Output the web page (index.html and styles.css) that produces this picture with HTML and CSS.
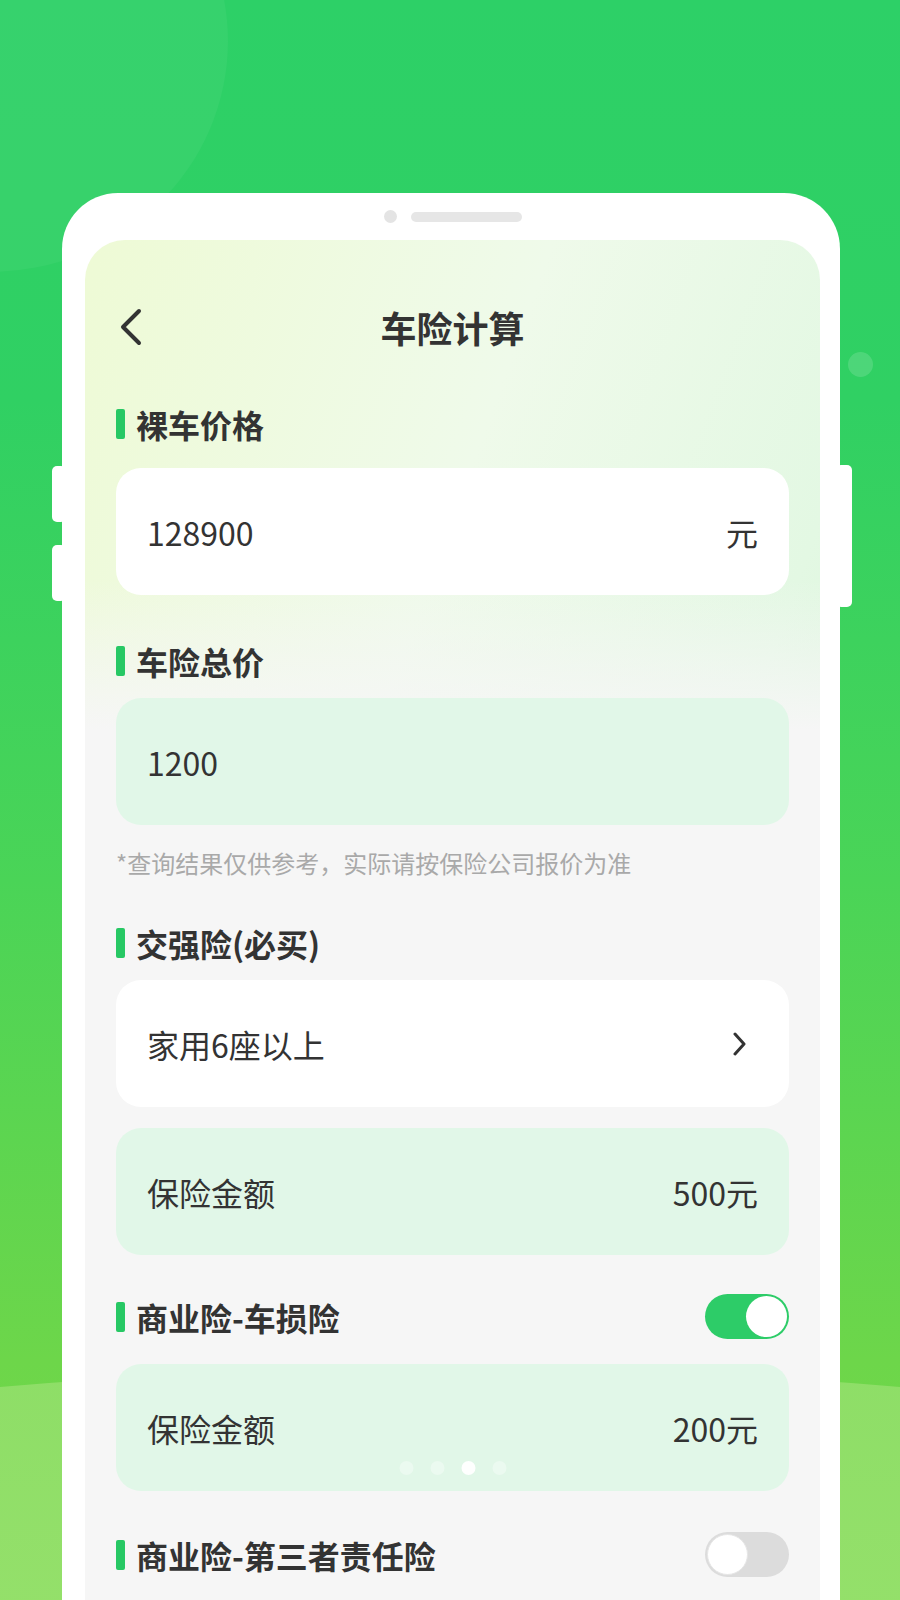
FILE: index.html
```html
<!DOCTYPE html>
<html lang="zh-CN">
<head>
    <meta charset="UTF-8">
    <meta name="viewport" content="width=device-width, initial-scale=1.0">
    <title>车险计算</title>
    <link rel="stylesheet" href="styles.css">
</head>
<body>
    <div class="bg-circle"></div>
    <div class="bg-dot"></div>
    <div class="bg-hill"></div>

    <div class="phone">
        <div class="speaker">
            <span class="camera"></span>
            <span class="grille"></span>
        </div>

        <div class="screen">
            <div class="nav">
                <svg class="back" width="24" height="38" viewBox="0 0 24 38">
                    <path d="M20 3 L4 19 L20 35" fill="none" stroke="#333" stroke-width="4" stroke-linecap="round" stroke-linejoin="round"/>
                </svg>
                <h1>车险计算</h1>
                <span></span>
            </div>

            <div class="section-title first">裸车价格</div>
            <div class="field white gap-lg">
                <span>128900</span>
                <span>元</span>
            </div>

            <div class="section-title">车险总价</div>
            <div class="field green">
                <span>1200</span>
            </div>
            <p class="note">*查询结果仅供参考，实际请按保险公司报价为准</p>

            <div class="section-title after-note">交强险(必买)</div>
            <div class="field white">
                <span>家用6座以上</span>
                <svg class="arrow" width="15" height="24" viewBox="0 0 15 24">
                    <path d="M3 2 L12 12 L3 22" fill="none" stroke="#333" stroke-width="3" stroke-linecap="round" stroke-linejoin="round"/>
                </svg>
            </div>
            <div class="field green stacked">
                <span>保险金额</span>
                <span>500元</span>
            </div>

            <div class="section-title toggle-row">
                <span>商业险-车损险</span>
                <span class="switch on"><span class="knob"></span></span>
            </div>
            <div class="field green gap-md">
                <span>保险金额</span>
                <span>200元</span>
            </div>

            <div class="section-title toggle-row last">
                <span>商业险-第三者责任险</span>
                <span class="switch"><span class="knob"></span></span>
            </div>

            <div class="dots">
                <span></span><span></span><span class="active"></span><span></span>
            </div>
        </div>
    </div>
</body>
</html>
```

FILE: styles.css
```css
body {
    margin: 0;
    width: 900px;
    height: 1600px;
    overflow: hidden;
    position: relative;
    font-family: "Noto Sans CJK SC", "Noto Sans", sans-serif;
    color: #333;
    background: linear-gradient(180deg, #2dd067 0%, #30d063 25%, #4ad457 55%, #6dd64a 85%, #74d846 100%);
}

/* background decorations */
.bg-circle {
    position: absolute;
    left: -250px;
    top: -190px;
    width: 478px;
    height: 462px;
    border-radius: 50%;
    background: rgba(255, 255, 255, 0.045);
}
.bg-dot {
    position: absolute;
    left: 848px;
    top: 352px;
    width: 25px;
    height: 25px;
    border-radius: 50%;
    background: rgba(255, 255, 255, 0.14);
}
.bg-hill {
    position: absolute;
    left: -750px;
    top: 1368px;
    width: 2400px;
    height: 520px;
    border-radius: 50%;
    background: linear-gradient(180deg, #8ede67 0%, #9be26e 100%);
}

/* phone frame */
.phone {
    position: relative;
    margin: 193px 0 0 62px;
    width: 735px;
    padding: 0 20px 0 23px;
    height: 1407px;
    background: #fff;
    border-radius: 56px 56px 0 0;
}
.phone::before,
.phone::after {
    content: "";
    position: absolute;
    background: #fff;
    border-radius: 5px;
}
.phone::before {
    left: -10px;
    top: 273px;
    width: 14px;
    height: 56px;
    box-shadow: 0 79px 0 #fff;
}
.phone::after {
    right: -12px;
    top: 272px;
    width: 16px;
    height: 142px;
}

.speaker {
    height: 47px;
    display: flex;
    align-items: center;
    justify-content: center;
    gap: 14px;
}
.camera {
    width: 13px;
    height: 13px;
    border-radius: 50%;
    background: #e4e4e4;
}
.grille {
    width: 111px;
    height: 10px;
    border-radius: 5px;
    background: #e6e6e6;
}

/* screen */
.screen {
    position: relative;
    height: 1360px;
    padding: 0 31px;
    border-radius: 40px 40px 0 0;
    background:
        linear-gradient(180deg, rgba(246, 246, 246, 0) 0, rgba(246, 246, 246, 0) 340px, #f6f6f6 490px),
        linear-gradient(110deg, #eefad5 0%, #effaea 38%, #e3f8e3 68%, #cff3d1 100%);
}

.nav {
    display: grid;
    grid-template-columns: 1fr auto 1fr;
    align-items: center;
    height: 50px;
    padding-top: 62px;
}
.back {
    margin-left: 3px;
}
.nav h1 {
    margin: 0;
    font-size: 36px;
    font-weight: 700;
    line-height: 50px;
    color: #333;
}

.section-title {
    display: flex;
    align-items: center;
    justify-content: space-between;
    height: 40px;
    margin-top: 46px;
    padding-left: 20px;
    position: relative;
    font-size: 32px;
    font-weight: 700;
    color: #333;
}
.section-title::before {
    content: "";
    position: absolute;
    left: 0;
    top: 50%;
    width: 9px;
    height: 30px;
    margin-top: -15px;
    border-radius: 2px;
    background: #27c864;
}
.section-title.first {
    margin-top: 52px;
}
.section-title.after-note {
    margin-top: 43px;
}
.toggle-row {
    height: 45px;
    margin-top: 39px;
}
.toggle-row.last {
    margin-top: 41px;
}

.field {
    display: flex;
    align-items: center;
    justify-content: space-between;
    height: 127px;
    margin-top: 17px;
    padding: 0 31px;
    border-radius: 25px;
    font-size: 32px;
    color: #333;
}
.field.white {
    background: #fff;
}
.field.green {
    background: #e1f7e8;
}
.field.gap-lg {
    margin-top: 24px;
}
.field.gap-md {
    margin-top: 25px;
}
.field.stacked {
    margin-top: 21px;
}
.arrow {
    margin-right: 11px;
}

.note {
    margin: 21px 0 0;
    font-size: 24px;
    line-height: 34px;
    color: #a9a9a9;
}

/* switches */
.switch {
    position: relative;
    width: 84px;
    height: 45px;
    border-radius: 23px;
    background: #dcdcdc;
}
.switch .knob {
    position: absolute;
    top: 2px;
    left: 2px;
    width: 41px;
    height: 41px;
    border-radius: 50%;
    background: #fff;
    box-sizing: border-box;
    border: 1px solid #e6e6e6;
}
.switch.on {
    background: #2dcc68;
}
.switch.on .knob {
    left: auto;
    right: 2px;
    border: none;
}

/* carousel indicator laid over the screenshot */
.dots {
    position: absolute;
    top: 1221px;
    left: 50%;
    transform: translateX(-50%);
    display: flex;
    gap: 17px;
}
.dots span {
    width: 14px;
    height: 14px;
    border-radius: 50%;
    background: rgba(255, 255, 255, 0.35);
}
.dots .active {
    background: rgba(255, 255, 255, 0.95);
}
```
